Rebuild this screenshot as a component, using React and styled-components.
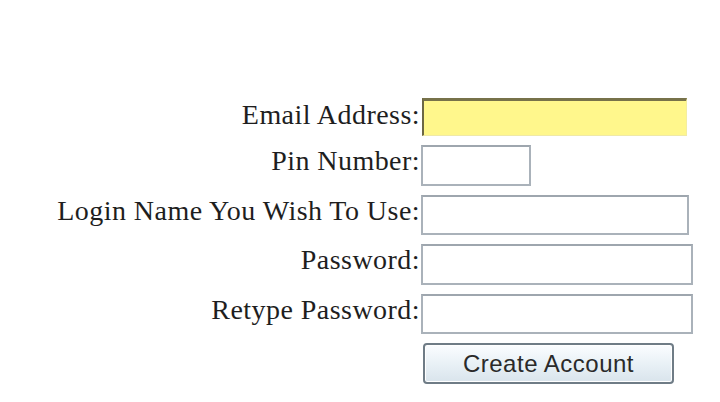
import React from 'react';
import styled, { createGlobalStyle } from 'styled-components';

const GlobalStyle = createGlobalStyle`
  html, body {
    margin: 0;
    padding: 0;
    background: #ffffff;
  }
`;

const Page = styled.div`
  width: 720px;
  height: 402px;
  overflow: hidden;
  background: #ffffff;
`;

const Form = styled.form`
  display: grid;
  grid-template-columns: 420px auto;
  column-gap: 1px;
  row-gap: 9px;
  align-items: start;
  padding-top: 97px;
  font-family: 'Liberation Serif', 'Times New Roman', serif;
`;

const Label = styled.label`
  justify-self: end;
  font-size: 28px;
  letter-spacing: 0.45px;
  line-height: 32px;
  margin-top: ${(p) => p.$offset || 0}px;
  color: #1e1e1e;
  white-space: nowrap;
`;

const Field = styled.input`
  box-sizing: border-box;
  width: ${(p) => p.$width}px;
  height: ${(p) => p.$height || 40}px;
  margin: 0;
  padding: 2px 6px;
  font-size: 20px;
  background: #ffffff;
  border: 2px solid #aab2ba;
  border-top-color: #9ea6ae;
  outline: none;
`;

const HighlightField = styled(Field)`
  height: 38px;
  margin-top: 1px;
  margin-left: 1px;
  background: #fff78c;
  border-top: 3px solid #77724a;
  border-left: 2px solid #6c6744;
  border-right: 1px solid #f4eea0;
  border-bottom: 1px solid #efe9a8;
`;

const Spacer = styled.div``;

const Button = styled.button`
  box-sizing: border-box;
  width: 251px;
  height: 41px;
  margin-left: 2px;
  font-family: 'Liberation Sans', Arial, sans-serif;
  font-size: 24px;
  letter-spacing: 0.5px;
  color: #2a2a2a;
  background: linear-gradient(#fbfdff, #e9f1f6 50%, #d9e4ec);
  border: 2px solid #6f7c86;
  border-radius: 4px;
  box-shadow: inset 0 0 0 1px #ffffff;
  cursor: pointer;
`;

const rows = [
  { label: 'Email Address:', width: 265, highlight: true, offset: 2 },
  { label: 'Pin Number:', width: 110, height: 41 },
  { label: 'Login Name You Wish To Use:', width: 268 },
  { label: 'Password:', width: 272, height: 41 },
  { label: 'Retype Password:', width: 272 },
];

export default function App() {
  return (
    <Page>
      <GlobalStyle />
      <Form onSubmit={(e) => e.preventDefault()}>
        {rows.map((row) => (
          <React.Fragment key={row.label}>
            <Label $offset={row.offset}>{row.label}</Label>
            {row.highlight ? (
              <HighlightField $width={row.width} type="text" />
            ) : (
              <Field
                $width={row.width}
                $height={row.height}
                type={row.label.includes('Password') ? 'password' : 'text'}
              />
            )}
          </React.Fragment>
        ))}
        <Spacer />
        <Button type="submit">Create Account</Button>
      </Form>
    </Page>
  );
}
